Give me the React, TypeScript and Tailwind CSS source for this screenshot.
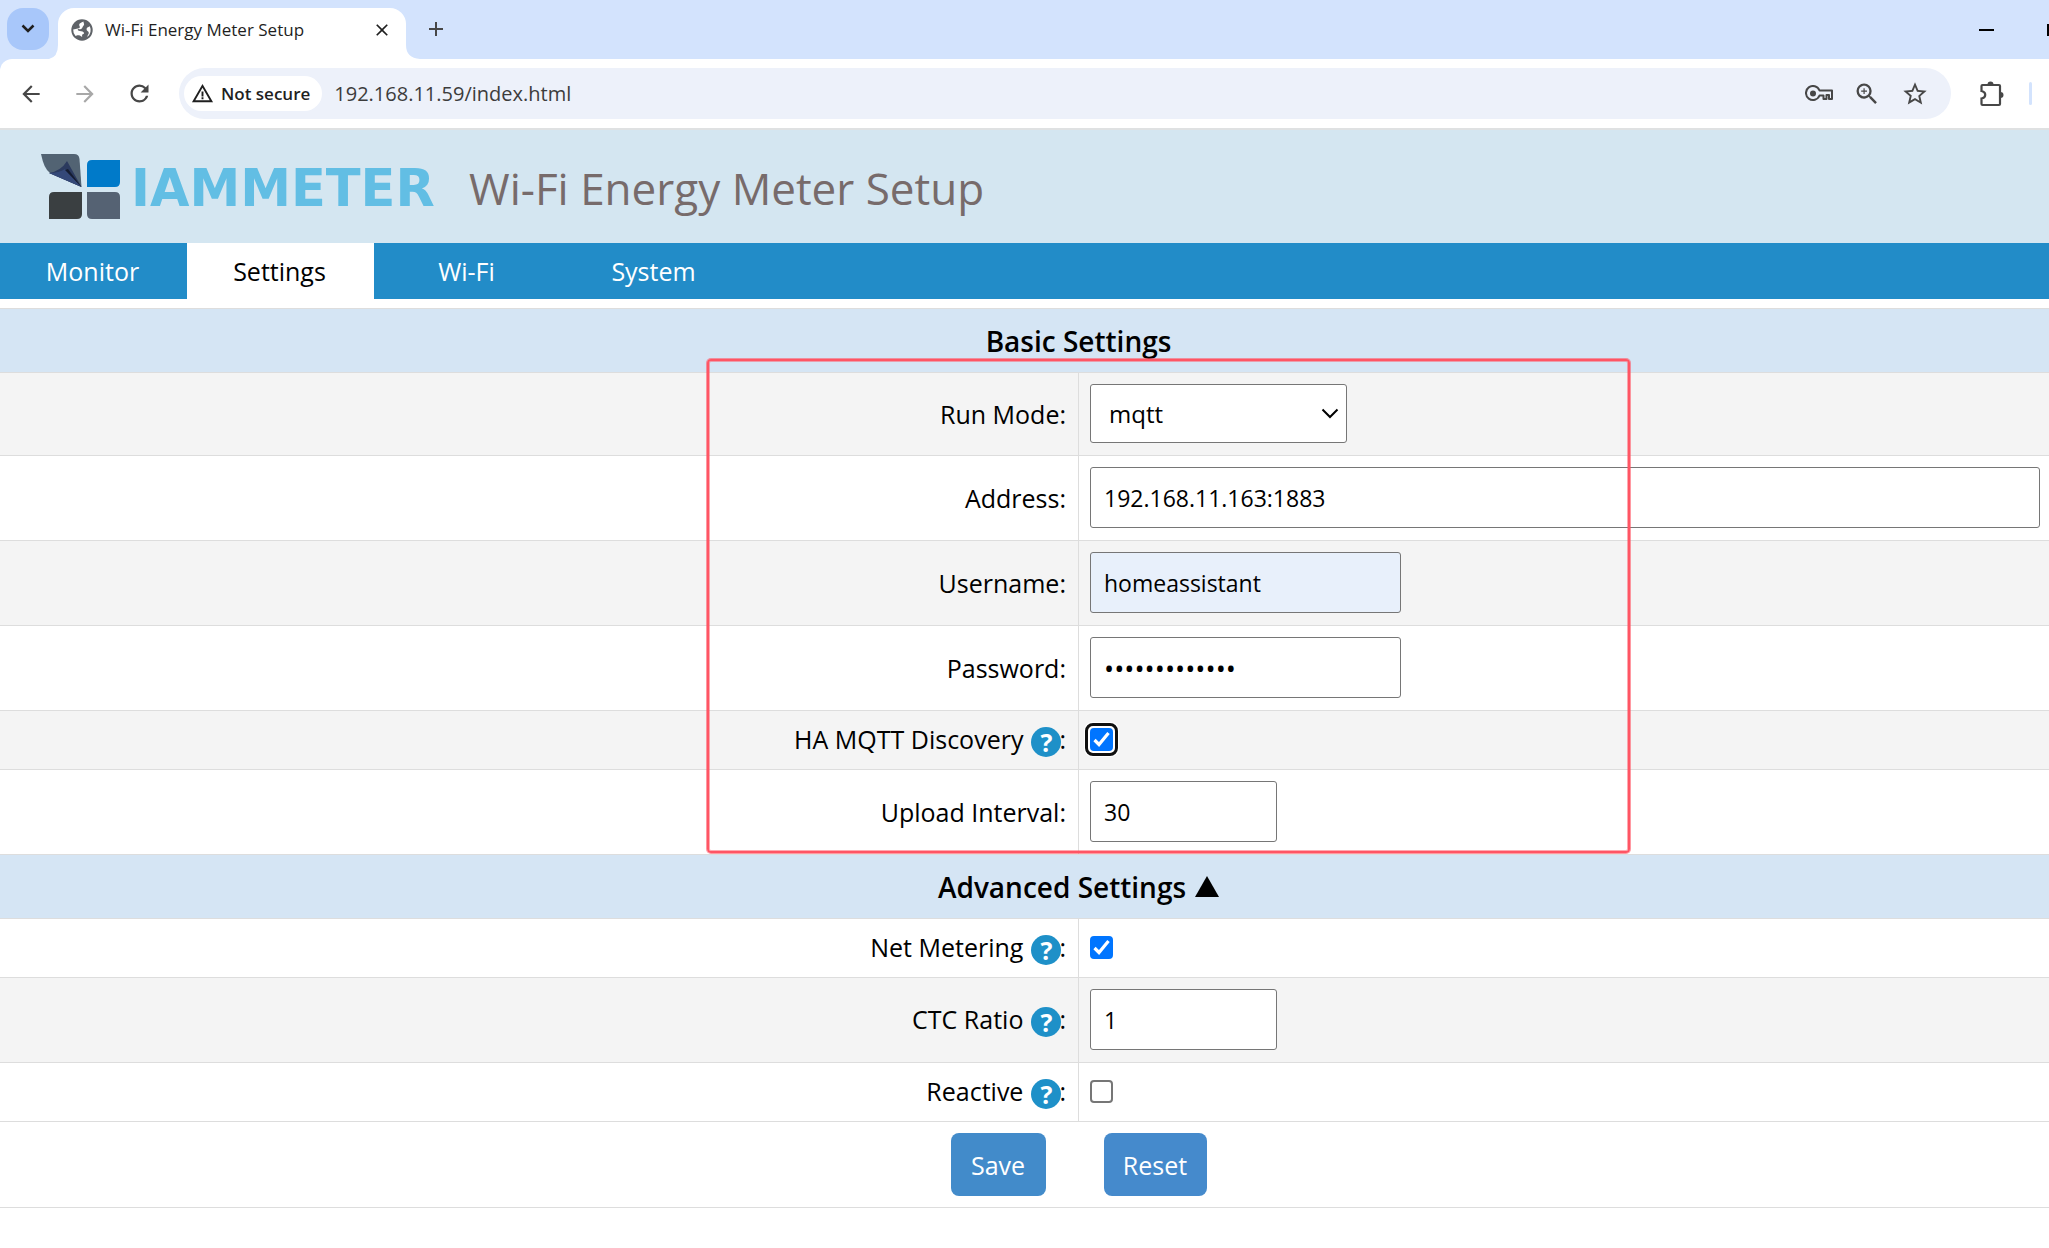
import React, { ReactNode } from "react";
import { MdAdd, MdArrowBack, MdArrowForward, MdClose, MdRefresh, MdStarOutline, MdWarningAmber, MdZoomIn } from "react-icons/md";
import { clsx } from "clsx";

const tabs = ["Monitor", "Settings", "Wi-Fi", "System"];

const inputClass = "block h-[61px] rounded-[3px] border border-[#767676] px-[13px] pt-[2px] text-black outline-none";

function Favicon() {
  return (
    <svg viewBox="0 0 22 22" className="size-[22px] shrink-0">
      <circle cx="11" cy="11" r="10.7" fill="#5f6368" />
      <path
        d="M12.500 2.500C10 3.800 8.800 4 8.200 5.400 8 6.800 9.200 7.400 8.800 8.400 8.200 9.700 6 9.400 2.200 10.400A8.800 8.800 0 0 0 4.600 17c1-.2 1.400-.9 3.200-.7 2 .2 1.800 1.500 3.400 1.500-.4-1.600 0-2.400 1.200-2.700.8-.3.7-1.200.2-1.900-1.200-1.300-3.400-.8-5.400-1.800-.8-.5-.5-1.300.4-1.300 2.200.2 3.400-.4 3.800-1.700.3-1.200 1.500-1.600 1.700-2.900.1-1.200-.8-1.700-.6-3z"
        fill="#fff"
      />
      <path d="M18.800 7.200c-2 1-3.400 1.200-3.200 3.200.2 2 2.400 1.500 2.200 3.600-.2 1.500-1.300 2-1.500 4A8.800 8.800 0 0 0 18.800 7.200z" fill="#fff" />
    </svg>
  );
}

function KeyIcon() {
  return (
    <svg viewBox="0 0 28 18" className="h-[18px] w-7" fill="none" stroke="#474747" strokeWidth="2">
      <path d="M14.500 5.500H27v8.500h-3v-4h-2.500v4h-3v-3.500h-4A7 7 0 1 1 14.500 5.500z" strokeLinejoin="round" />
      <circle cx="8" cy="8.500" r="3" fill="#474747" stroke="none" />
    </svg>
  );
}

function PuzzleIcon() {
  return (
    <svg viewBox="0 0 26 26" className="size-[26px]">
      <path
        d="M3.500 4h16.500a1 1 0 0 1 1 1v18a1 1 0 0 1-1 1H3.500a1 1 0 0 1-1-1v-5.500c5-1 5-6.500 0-7.500V5a1 1 0 0 1 1-1z"
        fill="none"
        stroke="#474747"
        strokeWidth="2.200"
      />
      <path d="M8.500 3.500a3 3 0 0 1 6 0zM21.500 11a3 3 0 0 1 0 6z" fill="#474747" />
    </svg>
  );
}

function Logo() {
  return (
    <svg viewBox="0 0 79 65" className="h-[65px] w-[79px] shrink-0">
      <path d="M0 0h33q5 0 5.500 5L40.500 33 9 19Q3 15 0 0z" fill="#526373" />
      <path d="M8 19Q20 17 26 7L40.500 33z" fill="#2b3a5e" />
      <path d="M8 19q10 0 16-4L40.500 33z" fill="#344878" />
      <path d="M24 16l3-1L40.500 33z" fill="#151c30" />
      <path d="M51 6h28v22q0 5-5 5H46V11q0-5 5-5z" fill="#007ac9" />
      <path d="M13 38h28v22q0 5-5 5H8V43q0-5 5-5z" fill="#3a3f41" />
      <path d="M46 38h28q5 0 5 5v22H51q-5 0-5-5z" fill="#556273" />
    </svg>
  );
}

function BrowserChrome() {
  return (
    <div className="bg-[#d3e3fd]">
      <div className="flex h-[59px] items-end pl-[7px]">
        <button aria-label="Search tabs" className="mb-[9px] flex h-[42px] w-[42px] items-center justify-center rounded-2xl bg-[#a8c7fa]">
          <svg viewBox="0 0 14 10" className="h-[10px] w-[14px]" fill="none" stroke="#1f1f1f" strokeWidth="2.500">
            <path d="M1.500 1.500 7 7l5.500-5.500" />
          </svg>
        </button>
        <svg viewBox="0 0 9 14" className="h-[14px] w-[9px]">
          <path d="M9 0v14H0q9-2 9-14z" fill="#fff" />
        </svg>
        <div className="flex h-[51px] w-[348px] items-center rounded-t-2xl bg-white pr-[14px] pb-2 pl-[13px]">
          <Favicon />
          <span className="ml-3 grow text-[17px] whitespace-nowrap text-[#1f1f1f]">Wi-Fi Energy Meter Setup</span>
          <button aria-label="Close tab">
            <MdClose size={20} color="#1f1f1f" />
          </button>
        </div>
        <svg viewBox="0 0 14 14" className="size-[14px]">
          <path d="M0 0v14h14Q0 13 0 0z" fill="#fff" />
        </svg>
        <button aria-label="New tab" className="mb-[18px] ml-1">
          <MdAdd size={24} color="#474747" />
        </button>
        <div className="mb-[23px] ml-auto flex items-center gap-[53px]">
          <button aria-label="Minimize" className="h-3 w-[15px]">
            <span className="block h-[2px] w-full bg-black" />
          </button>
          <button aria-label="Maximize" className="h-3 w-[2px] bg-black" />
        </div>
      </div>
      <div className="flex h-[71px] items-center rounded-tl-xl border-b-2 border-[#dfe1e2] bg-white pr-[17px] pl-[18px]">
        <button aria-label="Back">
          <MdArrowBack size={26} color="#474747" />
        </button>
        <button aria-label="Forward" className="ml-7">
          <MdArrowForward size={26} color="#a8a8a8" />
        </button>
        <button aria-label="Reload" className="ml-7">
          <MdRefresh size={27} color="#474747" />
        </button>
        <div className="ml-[26px] flex h-[51px] grow items-center rounded-full bg-[#edf1fa] pr-[22px] pl-[5px]">
          <button className="flex h-[35px] items-center gap-[7px] rounded-full bg-white pr-3 pl-[7px] text-[17px] font-semibold text-[#1f1f1f]">
            <MdWarningAmber size={23} />
            Not secure
          </button>
          <input
            aria-label="Address and search bar"
            className="ml-3 grow bg-transparent text-[20px] text-[#3c3c3c] outline-none"
            defaultValue="192.168.11.59/index.html"
          />
          <div className="flex items-center gap-[20px] text-[#474747]">
            <button aria-label="Passwords">
              <KeyIcon />
            </button>
            <button aria-label="Zoom">
              <MdZoomIn size={28} />
            </button>
            <button aria-label="Bookmark">
              <MdStarOutline size={28} />
            </button>
          </div>
        </div>
        <button aria-label="Extensions" className="ml-7">
          <PuzzleIcon />
        </button>
        <span className="ml-6 h-[23px] w-[3px] rounded-full bg-[#d3e3fd]" />
      </div>
    </div>
  );
}

function Help({ topic }: { topic: string }) {
  return (
    <button
      type="button"
      aria-label={"Help: " + topic}
      className="-mr-0.5 ml-2 inline-flex size-[30px] items-center justify-center rounded-full bg-[#1e90c8] align-middle text-[25px] leading-none font-bold text-white"
    >
      ?
    </button>
  );
}

type CheckboxProps = {
  id: string;
  checked?: boolean;
  focused?: boolean;
};

function Checkbox({ id, checked, focused }: CheckboxProps) {
  return (
    <span
      className={clsx(
        "relative block size-[23px] rounded-[3px]",
        focused && "shadow-[0_0_0_6px_#fff] outline-3 outline-offset-2 outline-[#101010]"
      )}
    >
      <input
        id={id}
        type="checkbox"
        defaultChecked={checked}
        className="peer block size-full appearance-none rounded-[4px] border-2 border-[#767676] bg-white checked:border-[#0075ff] checked:bg-[#0075ff] focus:outline-none"
      />
      <svg
        viewBox="0 0 23 23"
        className="pointer-events-none absolute inset-0 hidden size-full peer-checked:block"
        fill="none"
        stroke="#fff"
        strokeWidth="3.200"
      >
        <path d="M4.500 12l4.500 4.500L18.500 5" />
      </svg>
    </span>
  );
}

type RowProps = {
  id: string;
  label: string;
  help?: boolean;
  className?: string;
  children: ReactNode;
};

function Row({ id, label, help, className, children }: RowProps) {
  return (
    <tr className={clsx("border-y border-[#ddd]", className)}>
      <th scope="row" className="w-1/2 border-r border-[#ddd] pr-3 text-right leading-8 font-normal whitespace-nowrap">
        <label htmlFor={id}>{label}</label>
        {help && <Help topic={label} />}:
      </th>
      <td className="w-1/2 pb-[2px] pl-[11px]">{children}</td>
    </tr>
  );
}

function SectionTitle({ children }: { children: ReactNode }) {
  return (
    <tr className="h-16 border-y border-[#ddd] bg-[#d5e5f4]">
      <th colSpan={2} className="text-center text-[28px] leading-8 font-semibold">
        {children}
      </th>
    </tr>
  );
}

export default function App() {
  return (
    <div className="min-h-screen overflow-hidden bg-white font-['Open_Sans','Noto_Sans',sans-serif] text-[25px] text-black">
      <BrowserChrome />
      <header className="flex h-[113px] items-center bg-[#d4e6f1] pl-[41px]">
        <Logo />
        <span className="ml-[11px] w-[317px] pt-1 font-['DejaVu_Sans',sans-serif] text-[51px] leading-none font-bold text-[#62bee4]">
          IAMMETER
        </span>
        <h1 className="ml-[21px] pt-[2px] text-[44px] whitespace-nowrap text-[#776b6b]">Wi-Fi Energy Meter Setup</h1>
      </header>
      <nav className="flex h-14 bg-[#228cc8]">
        {tabs.map((tab) => (
          <a
            key={tab}
            href="#"
            className={clsx(
              "flex w-[187px] items-center justify-center pt-[2px] pr-[2px]",
              tab === "Settings" ? "bg-white text-black" : "text-white"
            )}
          >
            {tab}
          </a>
        ))}
      </nav>

      {/* the form is wider than the window, the rest scrolls off to the right */}
      <form className="relative mt-[9px] w-[calc(100%+108px)]" onSubmit={(e) => e.preventDefault()}>
        <table className="w-full table-fixed border-collapse">
          <tbody>
            <SectionTitle>Basic Settings</SectionTitle>
            <Row id="mode" label="Run Mode" className="h-[83px] bg-[#f4f4f4]">
              <div className="relative w-[257px]">
                <select
                  id="mode"
                  className="block h-[59px] w-full appearance-none rounded-[3px] border border-[#767676] bg-white pt-[2px] pl-[18px] text-[24px]"
                >
                  <option>mqtt</option>
                </select>
                <svg
                  viewBox="0 0 18 12"
                  className="pointer-events-none absolute top-6 right-2 h-3 w-[18px]"
                  fill="none"
                  stroke="#000"
                  strokeWidth="2"
                >
                  <path d="M1.500 1.500 9 9l7.500-7.500" />
                </svg>
              </div>
            </Row>
            <Row id="address" label="Address" className="h-[85px]">
              <input
                id="address"
                type="text"
                defaultValue="192.168.11.163:1883"
                className={clsx(inputClass, "w-[950px] bg-white text-[23px]")}
              />
            </Row>
            <Row id="username" label="Username" className="h-[85px] bg-[#f4f4f4]">
              <input
                id="username"
                type="text"
                defaultValue="homeassistant"
                className={clsx(inputClass, "w-[311px] bg-[#e8f0fb] text-[23px]")}
              />
            </Row>
            <Row id="password" label="Password" className="h-[85px]">
              <input
                id="password"
                type="password"
                defaultValue="1234567890123"
                className={clsx(inputClass, "w-[311px] bg-white text-[27px]")}
              />
            </Row>
            <Row id="discovery" label="HA MQTT Discovery" help className="h-[59px] bg-[#f4f4f4]">
              <Checkbox id="discovery" checked focused />
            </Row>
            <Row id="interval" label="Upload Interval" className="h-[85px]">
              <input id="interval" type="text" defaultValue="30" className={clsx(inputClass, "w-[187px] bg-white text-[23px]")} />
            </Row>
            <SectionTitle>
              <button type="button" className="inline-flex items-center gap-[9px]">
                Advanced Settings
                <svg viewBox="0 0 24 21" className="h-[21px] w-6">
                  <path d="M12 0l12 21H0z" />
                </svg>
              </button>
            </SectionTitle>
            <Row id="net" label="Net Metering" help className="h-[59px]">
              <Checkbox id="net" checked />
            </Row>
            <Row id="ratio" label="CTC Ratio" help className="h-[85px] bg-[#f4f4f4]">
              <input id="ratio" type="text" defaultValue="1" className={clsx(inputClass, "w-[187px] bg-white text-[23px]")} />
            </Row>
            <Row id="reactive" label="Reactive" help className="h-[59px]">
              <Checkbox id="reactive" />
            </Row>
            <tr className="h-[86px] border-y border-[#ddd]">
              <td colSpan={2}>
                <div className="flex justify-center gap-[58px] text-white">
                  <button type="submit" className="h-[63px] w-[95px] rounded-lg bg-[#428bca] pt-[2px]">
                    Save
                  </button>
                  <button type="reset" className="h-[63px] w-[103px] rounded-lg bg-[#458acc] pt-[2px]">
                    Reset
                  </button>
                </div>
              </td>
            </tr>
          </tbody>
        </table>
        {/* red highlight over the basic settings */}
        <div className="pointer-events-none absolute top-[51px] left-[707px] h-[494px] w-[923px] rounded-sm border-2 border-[#ff5564] ring-1 ring-[#ff5564]/60 inset-ring-1 inset-ring-[#ff5564]/50" />
      </form>
    </div>
  );
}
